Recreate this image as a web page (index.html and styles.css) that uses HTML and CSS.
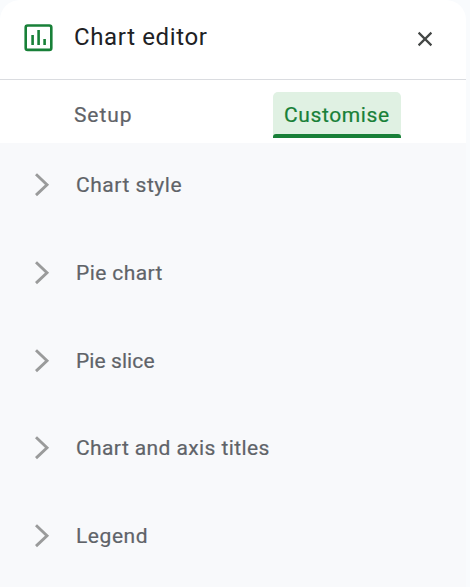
FILE: index.html
```html
<!DOCTYPE html>
<html lang="en-GB">
<head>
<meta charset="utf-8">
<title>Chart editor</title>
<link rel="stylesheet" href="styles.css">
</head>
<body>
<aside class="panel">
  <header class="header">
    <svg class="chart-icon" viewBox="0 0 28 28" aria-hidden="true">
      <rect x="1.7" y="1.5" width="25.6" height="24.4" rx="2"/>
      <path d="M8.6 11v10M14.6 6v15M20.6 15v6"/>
    </svg>
    <h1 class="title">Chart editor</h1>
    <button class="close" aria-label="Close">
      <svg viewBox="0 0 16 16"><path d="M1.6 1.6l12.8 12.8M14.4 1.6L1.6 14.4"/></svg>
    </button>
  </header>
  <nav class="tabs">
    <a class="tab setup">Setup</a>
    <a class="tab active">Customise</a>
  </nav>
  <main class="sections">
    <div class="row"><svg class="chevron" viewBox="0 0 16 24"><path d="M2 1.3L13 11.7L2 22.1"/></svg><span class="label style">Chart style</span></div>
    <div class="row"><svg class="chevron" viewBox="0 0 16 24"><path d="M2 1.3L13 11.7L2 22.1"/></svg><span class="label">Pie chart</span></div>
    <div class="row"><svg class="chevron" viewBox="0 0 16 24"><path d="M2 1.3L13 11.7L2 22.1"/></svg><span class="label slice">Pie slice</span></div>
    <div class="row"><svg class="chevron" viewBox="0 0 16 24"><path d="M2 1.3L13 11.7L2 22.1"/></svg><span class="label">Chart and axis titles</span></div>
    <div class="row"><svg class="chevron" viewBox="0 0 16 24"><path d="M2 1.3L13 11.7L2 22.1"/></svg><span class="label legend">Legend</span></div>
  </main>
</aside>
</body>
</html>
```
FILE: styles.css
```css
* { box-sizing: border-box; }
body {
  margin: 0;
  height: 587px;
  overflow: hidden;
  background: #f9fbfd;
  font-family: Roboto, "Liberation Sans", sans-serif;
}
svg { display: block; fill: none; overflow: visible; }
.panel {
  display: flex;
  flex-direction: column;
  width: 466px;
  height: 587px;
  overflow: hidden;
  border-radius: 20px 20px 0 0;
  background: #fff;
}
.header {
  display: flex;
  flex: none;
  align-items: center;
  height: 80px;
  padding: 0 33px 4px 24px;
  border-bottom: 1px solid #dadce0;
}
.chart-icon { width: 28px; height: 28px; margin-right: 22px; stroke: #188038; stroke-width: 2.6; }
.title { margin: 0 0 2px; color: #202124; font-size: 24px; line-height: 32px; font-weight: 400; letter-spacing: .64px; }
.close { margin: 2px 0 0 auto; padding: 0; border: 0; background: none; }
.close svg { width: 16px; height: 16px; stroke: #444746; stroke-width: 2.2; }
.tabs { display: flex; flex: none; height: 63px; padding: 12px 65px 0 74px; justify-content: space-between; }
.tab { height: 46px; color: #5f6368; font-size: 21px; line-height: 46px; letter-spacing: .6px; -webkit-text-stroke: .2px; }
.setup { letter-spacing: .9px; }
.tab.active {
  display: flex;
  flex-direction: column;
  width: 128px;
  border-radius: 5px 5px 0 0;
  background: #e0f1e3;
  color: #188038;
  padding-left: 11px;
}
.tab.active::after {
  content: "";
  flex: none;
  height: 4px;
  margin: -4px 0 0 -11px;
  border-radius: 3px 3px 0 0;
  background: #188038;
}
.sections { flex: 1; min-height: 0; padding-top: 22px; background: #f8f9fb; }
.row { display: flex; align-items: center; height: 40px; padding-left: 34px; margin-bottom: 47.8px; }
.chevron { width: 16px; height: 24px; margin-right: 26px; stroke: #9a9b9b; stroke-width: 2.9; }
.label { color: #5f6368; font-size: 21px; line-height: 28px; letter-spacing: .4px; -webkit-text-stroke: .2px; }
.style { letter-spacing: .53px; }
.slice { letter-spacing: .08px; }
.legend { letter-spacing: .55px; }
```
